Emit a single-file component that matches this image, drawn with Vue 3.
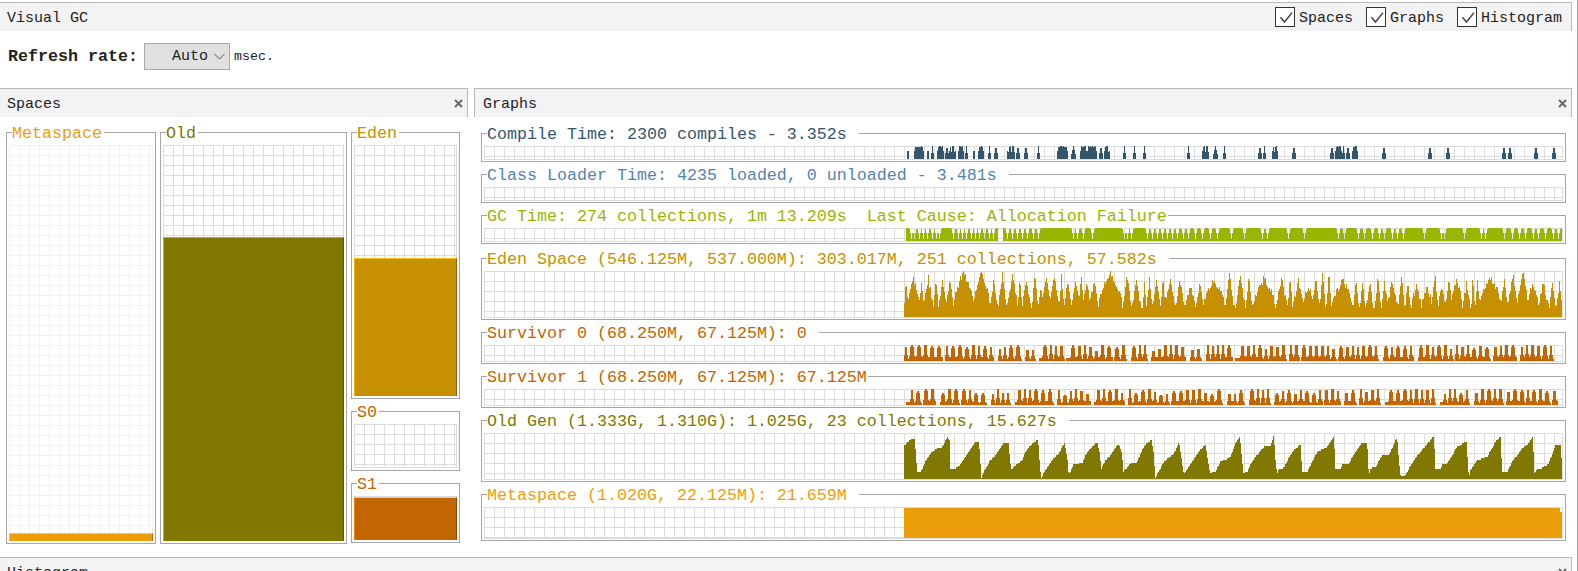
<script setup>
// deterministic random, so the charts come out the same on every run
const seeded = (seed) => () => {
  seed = (seed + 0x6d2b79f5) | 0
  let t = Math.imul(seed ^ (seed >>> 15), 1 | seed)
  t = (t + Math.imul(t ^ (t >>> 7), 61 | t)) ^ t
  return ((t ^ (t >>> 14)) >>> 0) / 4294967296
}

const PLOT_X = 484
const END = 1562

const barsPath = (heights, base) =>
  heights
    .map((h, i) => (h > 0 ? `M${i} ${base}V${base - h}H${i + 1}V${base}Z` : ''))
    .join('')

const emptySeries = () => new Array(END - PLOT_X).fill(0)

const compileRuns = [
  [907, 909], [914, 924], [927, 929], [931, 934], [937, 944], [945, 949], [949, 956], [958, 964],
  [965, 968], [973, 975], [978, 984], [988, 991], [994, 998], [1007, 1015], [1016, 1020], [1024, 1028],
  [1037, 1040], [1057, 1068], [1071, 1076], [1080, 1087], [1087, 1097], [1099, 1103], [1104, 1110],
  [1123, 1126], [1133, 1136], [1143, 1146], [1187, 1190], [1202, 1209], [1213, 1218], [1223, 1226],
  [1258, 1262], [1263, 1266], [1272, 1278], [1292, 1296], [1330, 1334], [1335, 1342], [1342, 1345],
  [1346, 1350], [1352, 1358], [1382, 1386], [1428, 1432], [1446, 1450], [1502, 1506], [1508, 1512],
  [1534, 1538], [1552, 1556]
]

const compileChart = () => {
  const s = emptySeries()
  const rnd = seeded(11)
  compileRuns.forEach(([a, b]) => {
    const w = b - a
    const mid = (a + b - 1) / 2
    for (let x = a; x < b; x++) {
      const d = Math.abs(x - mid) / (w / 2)
      let h = Math.round(13 - d * 10)
      if (w > 5) {
        h = d > 0.8 ? 8 : 13 - Math.floor(rnd() * 2)
        if (w < 10 && Math.abs(Math.sin(x * 1.1)) < 0.25) h = 7
      }
      s[x - PLOT_X] = Math.max(s[x - PLOT_X], h)
    }
  })
  return barsPath(s, 13)
}

const gcNotches = [
  911, 914, 919, 923, 927, 932, 936, 939, 953, 958, 962, 966, 971, 975, 979, 984, 989, 993, 1007, 1012,
  1017, 1022, 1027, 1033, 1038, 1073, 1077, 1083, 1092, 1124, 1127, 1131, 1147, 1152, 1157, 1162, 1167,
  1172, 1177, 1183, 1188, 1195, 1202, 1210, 1217, 1231, 1244, 1262, 1267, 1288, 1304, 1338, 1344, 1358,
  1364, 1372, 1379, 1384, 1392, 1397, 1403, 1424, 1441, 1444, 1464, 1481, 1485, 1504, 1512, 1519, 1525,
  1533, 1538, 1545, 1553, 1558
]

const gcChart = () => {
  const s = emptySeries()
  for (let x = 906; x < END; x++) s[x - PLOT_X] = 13
  for (let x = 998; x < 1003; x++) s[x - PLOT_X] = 0
  gcNotches.forEach((n) => {
    ;[[0, 2], [1, 8], [2, 12]].forEach(([d, h]) => {
      s[n - d - PLOT_X] = Math.min(s[n - d - PLOT_X], h)
      s[n + d - PLOT_X] = Math.min(s[n + d - PLOT_X], h)
    })
  })
  return barsPath(s, 13)
}

const edenChart = () => {
  const s = emptySeries()
  const rnd = seeded(77)
  let x = 904
  while (x < END) {
    const wide = rnd() < 0.14
    const w = wide ? 14 + Math.floor(rnd() * 12) : 4 + Math.floor(rnd() * 8)
    const peak = 36 + rnd() * 13
    const low = rnd() < 0.4 ? 9 + rnd() * 4 : 12 + rnd() * 10
    for (let i = 0; i < w && x + i < END; i++) {
      const k = (i + 0.5) / w
      let h = low + (peak - low) * Math.pow(1 - Math.abs(2 * k - 1), wide ? 0.6 : 1.1)
      h -= rnd() * 7
      s[x + i - PLOT_X] = Math.max(9, Math.min(46, Math.round(h)))
    }
    x += w
  }
  return barsPath(s, 46)
}

const survivorChart = (seed, start) => {
  const s = emptySeries()
  const rnd = seeded(seed)
  let x = start
  while (x < END - 8) {
    const teeth = 2 + Math.floor(rnd() * 7)
    if (rnd() < 0.15) {
      const ledge = 2 + Math.floor(rnd() * 4)
      for (let i = 0; i < ledge; i++) s[x + i - PLOT_X] = 3
      x += ledge
    }
    for (let t = 0; t < teeth && x < END - 8; t++) {
      const w = 4 + Math.floor(rnd() * 3)
      const peak = rnd() < 0.2 ? 10 + rnd() * 3 : 14 + rnd() * 3
      for (let i = 0; i < w; i++) {
        const k = (i + 0.5) / w
        s[x + i - PLOT_X] = Math.round(peak * Math.min(1, (1 - Math.abs(2 * k - 1)) * 1.7))
      }
      x += w
      // thin slit between two teeth
      s[x - PLOT_X] = rnd() < 0.5 ? 4 : 2
      x += 1
    }
    x += 1 + Math.floor(rnd() * 4)
  }
  return barsPath(s, 16)
}

// outline of the old gen sawtooth, read off the screen as [x, y]
const oldA = [
  42, 375, 60, 358, 72, 354, 76, 400, 80, 453, 92, 453, 105, 425, 120, 400, 140, 385, 155, 380, 170, 352,
  177, 360, 180, 447, 195, 445, 210, 432, 230, 400, 255, 365, 265, 362, 270, 430, 272, 474, 285, 445, 300, 420,
  315, 405, 340, 367, 355, 367, 358, 420, 362, 447, 375, 435, 395, 420, 405, 395, 425, 370, 443, 358, 447, 420,
  452, 474, 470, 440, 490, 415, 505, 400, 522, 367, 530, 410, 535, 463, 550, 432, 575, 428, 590, 395, 620, 365,
  628, 400, 632, 447, 645, 420, 660, 405, 685, 370, 695, 400, 698, 455, 720, 430, 740, 425, 760, 378, 783, 358,
  790, 400, 794, 474, 820, 425, 850, 400, 866, 366, 875, 430, 880, 462, 900, 430, 920, 400, 945, 373, 955, 440,
  958, 458, 975, 455, 990, 425, 1005, 415
]
const oldB = [
  0, 382, 30, 365, 45, 325, 58, 305, 65, 375, 68, 413, 80, 410, 95, 378, 130, 335, 150, 335, 160, 300, 165, 375,
  170, 417, 175, 400, 190, 398, 215, 350, 240, 328, 245, 410, 260, 410, 290, 350, 320, 335, 340, 303, 345, 402,
  362, 402, 365, 388, 385, 385, 405, 350, 425, 322, 440, 322, 445, 420, 450, 400, 465, 395, 485, 362, 505, 360,
  530, 305, 535, 375, 541, 425, 550, 425, 560, 410, 580, 375, 600, 350, 625, 320, 640, 303, 645, 400, 662, 400,
  665, 388, 680, 385, 710, 335, 738, 318, 745, 425, 750, 405, 770, 375, 800, 365, 825, 320, 840, 305, 845, 410,
  860, 410, 875, 380, 905, 340, 925, 325, 937, 305, 942, 415, 950, 400, 965, 398, 985, 385, 1005, 330, 1020, 328,
  1025, 395
]

const oldChart = () => {
  const pts = []
  for (let i = 0; i < oldA.length; i += 2) pts.push([890 + oldA[i] / 3, 320 + oldA[i + 1] / 3])
  for (let i = 0; i < oldB.length; i += 2) pts.push([1220 + oldB[i] / 3, 335 + oldB[i + 1] / 3])
  const s = emptySeries()
  for (let x = 904; x < END; x++) {
    let j = pts.findIndex((p) => p[0] > x)
    if (j < 1) j = pts.length - 1
    const [x0, y0] = pts[j - 1]
    const [x1, y1] = pts[j]
    const y = y0 + ((y1 - y0) * (x - x0)) / (x1 - x0)
    s[x - PLOT_X] = Math.round((479 - y) / 1.5) * 1.5
  }
  return barsPath(s, 46)
}

const metaChart = () => `M420 1H1076V5H1078V31H420Z`

const graphs = [
  { title: 'Compile Time: 2300 compiles - 3.352s', color: '#34566d', plot: 14, d: compileChart() },
  { title: 'Class Loader Time: 4235 loaded, 0 unloaded - 3.481s', color: '#5285ae', plot: 14, d: '' },
  { title: 'GC Time: 274 collections, 1m 13.209s  Last Cause: Allocation Failure', color: '#9ab500', plot: 14, d: gcChart(), tight: true },
  { title: 'Eden Space (546.125M, 537.000M): 303.017M, 251 collections, 57.582s', color: '#c69000', plot: 47, d: edenChart(), apart: true },
  { title: 'Survivor 0 (68.250M, 67.125M): 0', color: '#c16600', plot: 17, d: survivorChart(5, 904) },
  { title: 'Survivor 1 (68.250M, 67.125M): 67.125M', color: '#c16600', plot: 17, d: survivorChart(23, 906), tight: true },
  { title: 'Old Gen (1.333G, 1.310G): 1.025G, 23 collections, 15.627s', color: '#807800', plot: 47, d: oldChart() },
  { title: 'Metaspace (1.020G, 22.125M): 21.659M', color: '#ec9e0a', plot: 32, d: metaChart() }
]

const spaces = [
  [{ name: 'Metaspace', cls: 'meta', width: 150, height: 425, plot: 396, bar: 8, faint: true }],
  [{ name: 'Old', cls: 'old', width: 187, height: 425, plot: 396, bar: 304 }],
  [
    { name: 'Eden', cls: 'eden', width: 109, height: 280, plot: 251, bar: 138 },
    { name: 'S0', cls: 's', width: 109, height: 73, plot: 44, bar: 0 },
    { name: 'S1', cls: 's', width: 109, height: 73, plot: 44, bar: 43 }
  ]
]

const toggles = ['Spaces', 'Graphs', 'Histogram']
</script>

<template>
  <div class="window">
    <header class="head top">
      <span>Visual GC</span>
      <div class="toggles">
        <label v-for="t in toggles" :key="t" class="toggle">
          <svg class="check" width="20" height="20" viewBox="0 0 20 20">
            <rect x="0.5" y="0.5" width="19" height="19" fill="#fff" stroke="#333" />
            <polyline points="5.5,10.2 9.5,15 17,5.6" fill="none" stroke="#444" stroke-width="1.5" />
          </svg>
          <span>{{ t }}</span>
        </label>
      </div>
    </header>

    <div class="toolbar">
      <b class="rate">Refresh rate:</b>
      <div class="select">
        <span>Auto</span>
        <svg width="11" height="7" viewBox="0 0 11 7">
          <polyline points="0.5,1 5.5,6 10.5,1" fill="none" stroke="#555" />
        </svg>
      </div>
      <span class="unit">msec.</span>
    </div>

    <div class="panels">
      <section class="panel">
        <header class="head">
          <span>Spaces</span>
          <svg class="close" width="9" height="9" viewBox="0 0 9 9">
            <path d="M1 1L8 8M8 1L1 8" stroke="#666" stroke-width="1.8" />
          </svg>
        </header>
        <div class="spaces">
          <div v-for="(col, i) in spaces" :key="i" class="space-col">
            <fieldset
              v-for="s in col"
              :key="s.name"
              class="box space"
              :class="s.cls"
              :style="{ width: s.width + 'px', height: s.height + 'px' }"
            >
              <legend>{{ s.name }}</legend>
              <div class="plot fill" :class="{ faint: s.faint }" :style="{ height: s.plot + 'px' }">
                <div v-if="s.bar" class="bar" :style="{ height: s.bar + 'px' }"></div>
              </div>
            </fieldset>
          </div>
        </div>
      </section>

      <section class="panel graphs-panel">
        <header class="head">
          <span>Graphs</span>
          <svg class="close" width="9" height="9" viewBox="0 0 9 9">
            <path d="M1 1L8 8M8 1L1 8" stroke="#666" stroke-width="1.8" />
          </svg>
        </header>
        <div class="graphs">
          <fieldset
            v-for="g in graphs"
            :key="g.title"
            class="box graph"
            :class="{ apart: g.apart, tight: g.tight }"
            :style="{ color: g.color }"
          >
            <legend>{{ g.title }}</legend>
            <div class="plot" :style="{ height: g.plot + 'px' }">
              <svg
                class="chart"
                width="1079"
                :height="g.plot"
                :viewBox="`0 0 1079 ${g.plot}`"
                shape-rendering="crispEdges"
              >
                <path :d="g.d" fill="currentColor" />
              </svg>
            </div>
          </fieldset>
        </div>
      </section>
    </div>

    <section class="panel last">
      <header class="head">
        <span>Histogram</span>
        <svg class="close" width="9" height="9" viewBox="0 0 9 9">
          <path d="M1 1L8 8M8 1L1 8" stroke="#666" stroke-width="1.8" />
        </svg>
      </header>
    </section>
  </div>
</template>

<style>
body {
  background: #fff;
  overflow: hidden;
}
</style>

<style scoped>
.window {
  width: 1578px;
  height: 571px;
  box-sizing: border-box;
  padding: 2px 5px 0 0;
  border-right: 1px solid #8fa3b3;
  overflow: hidden;
  font-family: "Liberation Mono", "DejaVu Sans Mono", monospace;
  font-size: 15px;
  color: #222;
  background: #fff;
}

.head {
  display: flex;
  justify-content: space-between;
  align-items: center;
  height: 28px;
  box-sizing: content-box;
  padding: 0 4px 0 7px;
  background: #f3f3f3;
  border-top: 1px solid #b8b8b8;
  border-right: 1px solid #b8b8b8;
}

.head > span {
  padding-top: 3px;
}

.head.top {
  padding-right: 9px;
}

.toggles {
  display: flex;
  gap: 13px;
}

.toggle {
  display: flex;
  align-items: center;
  gap: 4px;
}

.toggle span {
  padding-top: 3px;
}

.check {
  display: block;
}

.toolbar {
  display: flex;
  align-items: center;
  height: 57px;
  padding: 0 0 7px 8px;
  box-sizing: border-box;
}

.rate {
  font-size: 16.67px;
  margin-right: 6px;
  padding-top: 1px;
}

.select {
  display: flex;
  align-items: center;
  justify-content: flex-end;
  gap: 6px;
  width: 86px;
  height: 27px;
  box-sizing: border-box;
  padding-right: 4px;
  background: #e0e0e0;
  border: 1px solid #a8a8a8;
}

.unit {
  font-size: 13.33px;
  margin-left: 4px;
  padding-top: 1px;
}

.panels {
  display: flex;
  gap: 6px;
  height: 469px;
}

.panel {
  width: 468px;
}

.graphs-panel {
  width: 1098px;
}

.graphs-panel .head {
  padding-left: 8px;
  border-left: 1px solid #b8b8b8;
}

.panel.last {
  width: 1572px;
}

.spaces {
  display: flex;
  align-items: flex-start;
  gap: 4px;
  padding: 2px 0 0 6px;
}

.space-col {
  display: flex;
  flex-direction: column;
}

.box {
  box-sizing: border-box;
  margin: 0;
  min-width: 0;
  padding: 0 2px 1px;
  border: 1px solid #a6a6a6;
}

.box legend {
  display: block;
  height: 26px;
  line-height: 30px;
  margin-left: 3px;
  padding: 0 12px 0 0;
  font-size: 16.67px;
  white-space: pre;
}

.space + .space {
  margin-top: -1px;
}

.space legend {
  padding-right: 2px;
}

.plot {
  box-sizing: border-box;
  border-right: 1px solid #dcdcdc;
  border-bottom: 1px solid #dcdcdc;
  background-image:
    linear-gradient(to right, #dcdcdc 1px, transparent 1px),
    linear-gradient(to bottom, #dcdcdc 1px, transparent 1px);
  background-size: 10px 10px;
}

.plot.faint {
  border-color: #f2f2f2;
  background-image:
    linear-gradient(to right, #f2f2f2 1px, transparent 1px),
    linear-gradient(to bottom, #f2f2f2 1px, transparent 1px);
}

.plot.fill {
  display: flex;
  flex-direction: column;
  justify-content: flex-end;
}

.bar {
  box-sizing: border-box;
  margin: 0 -1px -1px 0;
  border-style: solid;
  border-width: 1px 1px 0 1px;
}

.meta legend { color: #ec9e0a; }
.meta .bar { background: #ec9e0a; border-color: #ffd400 #a86e00 #ec9e0a #ffc800; }

.old legend { color: #807800; }
.old .bar { background: #807800; border-color: #bdb400 #5c5600 #807800 #bdb400; }

.eden legend { color: #c69000; }
.eden .bar { background: #c69000; border-color: #f0c000 #8a6400 #c69000 #f0b400; }

.s legend { color: #c16600; }
.s .bar { background: #c16600; border-color: #d0d0d0 #8a4800 #c16600 #f08000; }

.graphs {
  display: flex;
  flex-direction: column;
  padding: 3px 0 0 7px;
}

.graph {
  width: 1085px;
}

.graph + .graph {
  margin-top: -1px;
}

.graph.apart {
  margin-top: 1px;
}

.graph.tight legend {
  padding-right: 1px;
}

.chart {
  display: block;
}
</style>
